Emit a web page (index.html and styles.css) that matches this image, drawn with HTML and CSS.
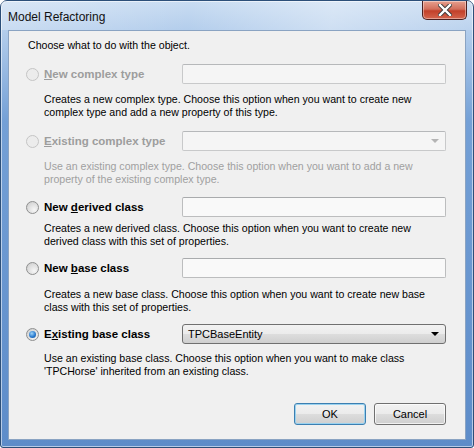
FILE: index.html
```html
<!DOCTYPE html>
<html>
<head lang="en">
    <meta charset="utf-8">
    <title>Model Refactoring</title>
    <link rel="stylesheet" href="styles.css">
</head>
<body>

<div class="window">
    <div class="titlebar">
        <span class="title">Model Refactoring</span>
        <span class="close">
            <svg width="14" height="12" viewBox="0 0 14 12">
                <path d="M2 1 L12 11 M12 1 L2 11" stroke="#3a3a3a" stroke-width="4.2" stroke-linecap="square"/>
                <path d="M2 1 L12 11 M12 1 L2 11" stroke="#fff" stroke-width="2.4" stroke-linecap="square"/>
            </svg>
        </span>
    </div>

    <div class="client">
        <p class="intro">Choose what to do with the object.</p>

        <div class="option opt1">
            <div class="row disabled">
                <label class="choice"><span class="radio"></span><span class="label"><u>N</u>ew complex type</span></label>
                <span class="field"></span>
            </div>
            <p class="desc">Creates a new complex type. Choose this option when you want to create new<br>complex type and add a new property of this type.</p>
        </div>

        <div class="option disabled opt2">
            <div class="row">
                <label class="choice"><span class="radio"></span><span class="label"><u>E</u>xisting complex type</span></label>
                <span class="field combo-off"><span class="arrow"></span></span>
            </div>
            <p class="desc">Use an existing complex type. Choose this option when you want to add a new<br>property of the existing complex type.</p>
        </div>

        <div class="option opt3">
            <div class="row">
                <label class="choice"><span class="radio"></span><span class="label">New <u>d</u>erived class</span></label>
                <span class="field"></span>
            </div>
            <p class="desc">Creates a new derived class. Choose this option when you want to create new<br>derived class with this set of properties.</p>
        </div>

        <div class="option opt4">
            <div class="row">
                <label class="choice"><span class="radio"></span><span class="label">New <u>b</u>ase class</span></label>
                <span class="field"></span>
            </div>
            <p class="desc">Creates a new base class. Choose this option when you want to create new base<br>class with this set of properties.</p>
        </div>

        <div class="option opt5">
            <div class="row">
                <label class="choice"><span class="radio checked"></span><span class="label">E<u>x</u>isting base class</span></label>
                <span class="field combo">TPCBaseEntity<span class="arrow"></span></span>
            </div>
            <p class="desc">Use an existing base class. Choose this option when you want to make class<br>'TPCHorse' inherited from an existing class.</p>
        </div>

        <div class="buttons">
            <button class="btn default">OK</button>
            <button class="btn">Cancel</button>
        </div>
    </div>
</div>

</body>
</html>
```

FILE: styles.css
```css
* { box-sizing: border-box; }

body {
    margin: 0;
    font-family: "Liberation Sans", Arial, sans-serif;
    font-size: 10.6px;
    color: #000;
    background: #fff;
}

.window {
    width: 474px;
    height: 448px;
    border: 1px solid #2c4f79;
    border-radius: 7px 7px 3px 3px;
    background: linear-gradient(to bottom, #c9dcf2 0, #b3cdec 30px, #74a0d6 120px, #5d8cc9 100%);
    padding: 0 7px 7px 7px;
    display: flex;
    flex-direction: column;
    box-shadow: inset 0 0 0 1px rgba(255,255,255,0.55);
}

.titlebar {
    height: 29px;
    display: flex;
    align-items: flex-start;
    justify-content: space-between;
    background: linear-gradient(100deg, rgba(255,255,255,0.3) 0, rgba(255,255,255,0) 40%, rgba(255,255,255,0.35) 70%, rgba(255,255,255,0.1) 100%);
    margin: 0 -7px;
    padding: 0 6px 0 7px;
}

.title {
    font-size: 12px;
    margin-top: 9px;
    color: #111;
}

.close {
    width: 45px;
    height: 19px;
    border: 1px solid #4b2020;
    border-top: none;
    border-radius: 0 0 5px 5px;
    background: linear-gradient(to bottom, #e6a08f 0, #d26f5c 45%, #c2402a 55%, #d4654d 100%);
    display: flex;
    align-items: center;
    justify-content: center;
    box-shadow: inset 0 0 0 1px rgba(255,255,255,0.4);
}

.client {
    flex: 1;
    background: #f0f0f0;
    border: 1px solid #8aa3c2;
    padding: 0 19px 0 17px;
    display: flex;
    flex-direction: column;
}

.intro {
    margin: 8px 0 0 2px;
    line-height: 13px;
}

.option .desc {
    margin: 0 0 0 18px;
    line-height: 13px;
    white-space: nowrap;
}

.opt1 { margin-top: 12px; }
.opt2 { margin-top: 12px; }
.opt3 { margin-top: 11px; }
.opt4 { margin-top: 10px; }
.opt5 { margin-top: 10px; }

.opt1 .desc { margin-top: 9px; }
.opt2 .desc { margin-top: 9px; }
.opt3 .desc { margin-top: 5px; }
.opt4 .desc { margin-top: 10px; }
.opt5 .desc { margin-top: 8px; }

.row {
    display: flex;
    align-items: center;
    justify-content: space-between;
    height: 20px;
}

.choice {
    display: flex;
    align-items: center;
    gap: 5px;
}

.label {
    font-weight: bold;
    font-size: 11.5px;
}

.radio {
    width: 13px;
    height: 13px;
    border-radius: 50%;
    border: 1px solid #8e8f8f;
    background: radial-gradient(circle at 65% 70%, #f6f6f6 0, #dcdcdc 60%, #c6c6c6 100%);
    display: flex;
    align-items: center;
    justify-content: center;
}

.radio.checked::after {
    content: "";
    width: 7px;
    height: 7px;
    border-radius: 50%;
    background: radial-gradient(circle at 40% 35%, #9fd4f7 0, #2a7bcf 55%, #0f4b8f 100%);
}

.disabled { color: #a0a0a0; }
.disabled .label { color: #9d9d9d; }
.disabled .radio { border-color: #c5c5c5; background: #ececec; }

.field {
    width: 264px;
    height: 20px;
    border: 1px solid #c8c9ca;
    border-top-color: #b6b8ba;
    border-radius: 2px;
    background: #f5f5f5;
    position: relative;
}

.opt3 .field, .opt4 .field {
    background: #f9f9f9;
    border-color: #bcbdbe;
    border-top-color: #a9abad;
}

.arrow {
    position: absolute;
    right: 6px;
    top: 7px;
    border-left: 4px solid transparent;
    border-right: 4px solid transparent;
    border-top: 4px solid #000;
}

.combo-off .arrow { border-top-color: #b4b4b4; }

.combo {
    border: 1px solid #707070;
    border-radius: 3px;
    background: linear-gradient(to bottom, #f2f2f2 0, #ebebeb 50%, #dddddd 51%, #cfcfcf 100%);
    padding: 3px 0 0 5px;
    line-height: 13px;
    font-size: 11px;
}

.buttons {
    margin-top: auto;
    margin-bottom: 14px;
    display: flex;
    justify-content: flex-end;
    gap: 8px;
}

.btn {
    width: 72px;
    height: 22px;
    font-family: inherit;
    font-size: 11px;
    color: #000;
    border: 1px solid #707070;
    border-radius: 3px;
    background: linear-gradient(to bottom, #f2f2f2 0, #ebebeb 50%, #dddddd 51%, #cfcfcf 100%);
    box-shadow: inset 0 0 0 1px rgba(255,255,255,0.7);
    padding: 0;
}

.btn.default {
    border-color: #3c7fb1;
    box-shadow: inset 0 0 0 1px #9ad2ef;
}
```
